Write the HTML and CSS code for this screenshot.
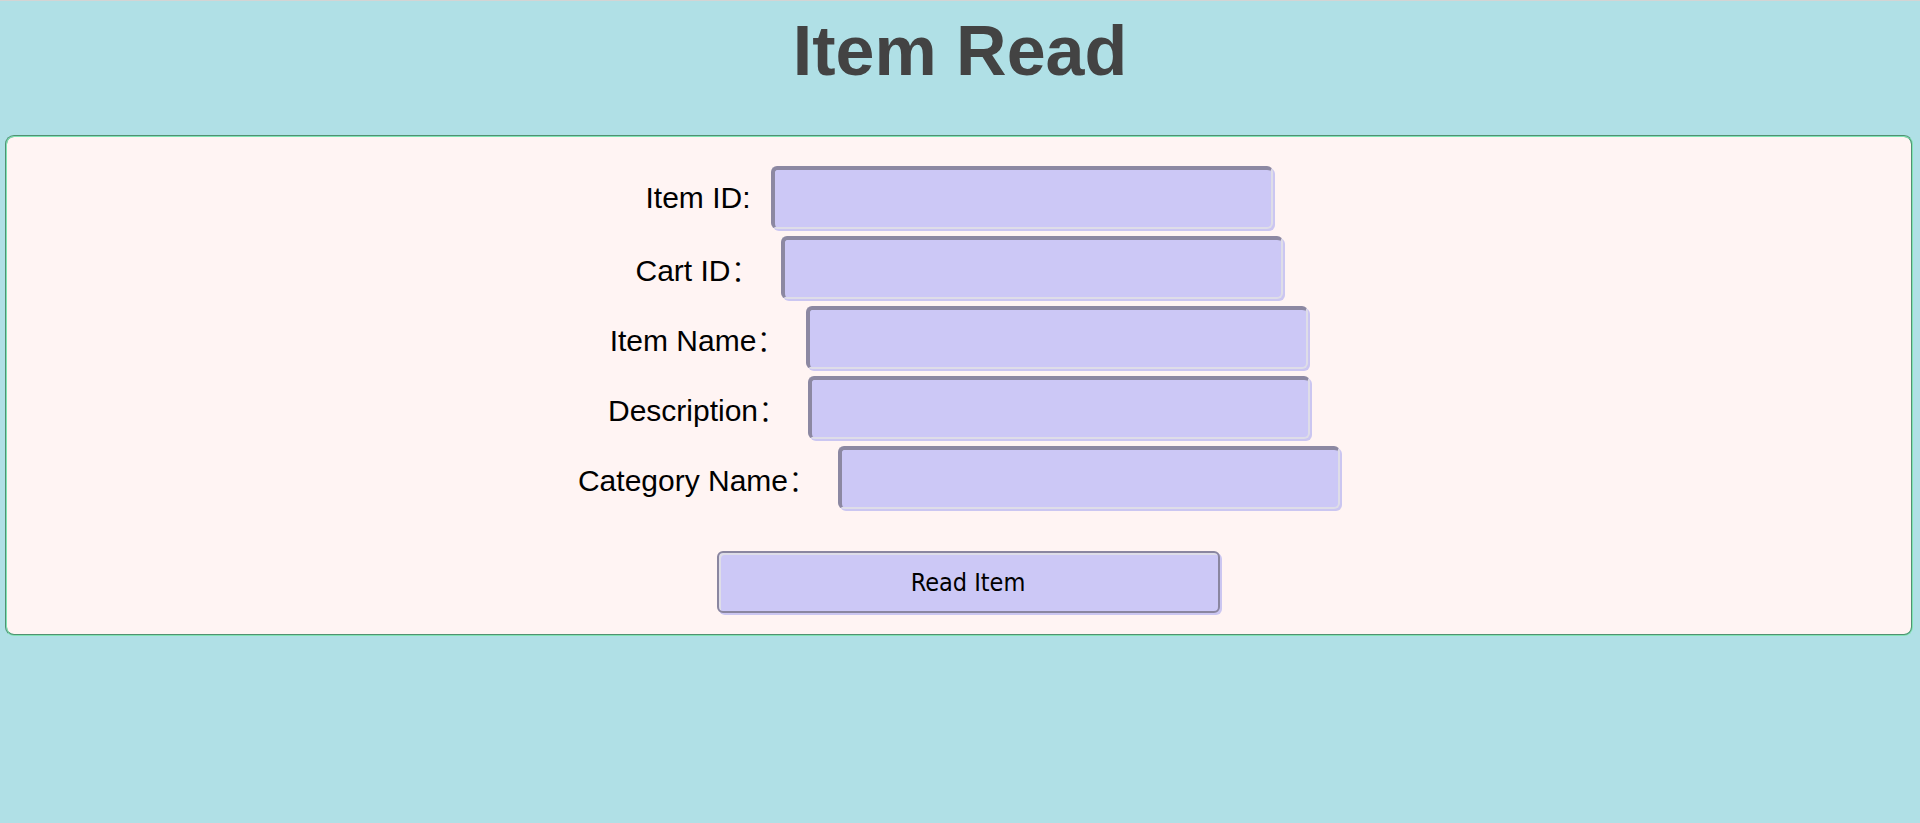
FILE: index.html
```html
<!DOCTYPE html>
<html lang="en">
<head>
<meta charset="utf-8">
<title>Item Read</title>
<link rel="stylesheet" href="styles.css">
</head>
<body>
<h1 class="title">Item Read</h1>
<form class="panel">
  <div class="row">
    <label class="label" for="itemId">Item ID:</label>
    <input class="field" id="itemId" type="text">
  </div>
  <div class="row">
    <label class="label" for="cartId">Cart ID<span class="cjk">：</span></label>
    <input class="field" id="cartId" type="text">
  </div>
  <div class="row">
    <label class="label" for="itemName">Item Name<span class="cjk">：</span></label>
    <input class="field" id="itemName" type="text">
  </div>
  <div class="row">
    <label class="label" for="description">Description<span class="cjk">：</span></label>
    <input class="field" id="description" type="text">
  </div>
  <div class="row">
    <label class="label" for="categoryName">Category Name<span class="cjk">：</span></label>
    <input class="field" id="categoryName" type="text">
  </div>
  <div class="actions">
    <button class="btn" type="button">Read Item</button>
  </div>
</form>
</body>
</html>
```

FILE: styles.css
```css
html {
  background: #b0e0e6;
  border-top: 1px solid #d4d4d4;
}

body {
  margin: 0;
  font-family: "Liberation Sans", Arial, sans-serif;
}

.title {
  margin: 15px 0 0;
  text-align: center;
  font-size: 70px;
  line-height: 70px;
  font-weight: bold;
  color: #434343;
}

.panel {
  margin: 49px 7px 0 5px;
  padding: 29px 0 21px;
  background: #fff4f3;
  border: 2px groove #80e4b4;
  border-radius: 9px;
  display: flex;
  flex-direction: column;
  gap: 7px;
}

.row {
  display: flex;
  justify-content: center;
  align-items: center;
  gap: 20px;
}

.label {
  font-size: 30px;
  color: #000;
  white-space: pre;
}

.cjk {
  font-family: "Noto Sans CJK SC", "Noto Sans CJK JP", sans-serif;
  font-weight: 300;
}

.field {
  box-sizing: border-box;
  width: 502px;
  height: 63px;
  margin: 0;
  padding: 0 8px;
  background: #ccc8f6;
  border-style: solid;
  border-width: 4px 2px 2px 4px;
  border-color: #8c88a2 #dedde8 #dedde8 #8c88a2;
  border-radius: 6px;
  box-shadow: 2px 2px 0 0 #cbc6f1;
  font-size: 20px;
}

.actions {
  display: flex;
  justify-content: center;
  margin-top: 35px;
}

.btn {
  box-sizing: border-box;
  width: 503px;
  height: 62px;
  margin: 0 0 0 18px;
  background: #ccc8f6;
  border: 2px solid #8a86a0;
  border-radius: 6px;
  box-shadow: inset 2px 2px 0 0 #dedde8, 2px 2px 0 0 #cbc6f1;
  font-family: "DejaVu Sans Condensed", "DejaVu Sans", sans-serif;
  font-stretch: condensed;
  font-size: 25px;
  color: #000;
  cursor: pointer;
}
```
